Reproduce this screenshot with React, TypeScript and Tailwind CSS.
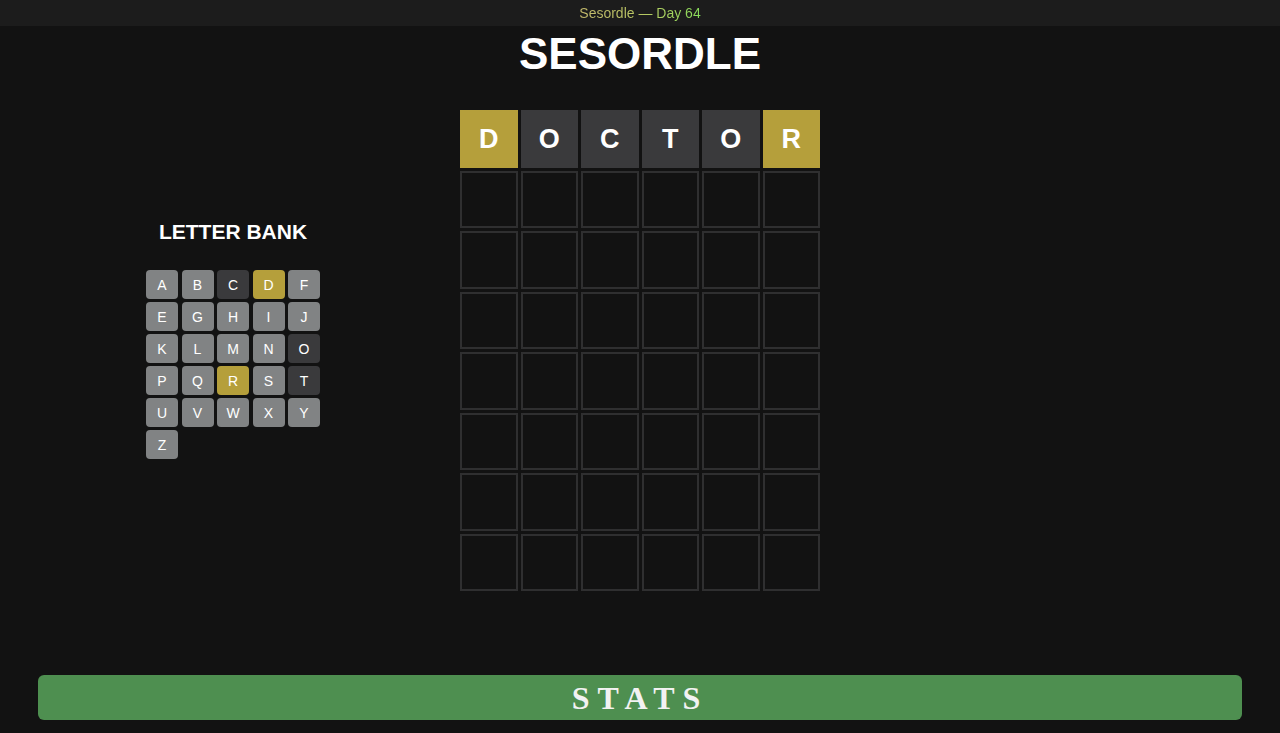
import React from "react";

type Mark = "present" | "absent" | "unused";

const guess: { letter: string; mark: Mark }[] = [
  { letter: "D", mark: "present" },
  { letter: "O", mark: "absent" },
  { letter: "C", mark: "absent" },
  { letter: "T", mark: "absent" },
  { letter: "O", mark: "absent" },
  { letter: "R", mark: "present" },
];

const bank: { letter: string; mark: Mark }[] = [
  "A", "B", "C", "D", "F", "E", "G", "H", "I", "J", "K", "L", "M",
  "N", "O", "P", "Q", "R", "S", "T", "U", "V", "W", "X", "Y", "Z",
].map((letter) => ({
  letter,
  mark: "DR".includes(letter) ? "present" : "COT".includes(letter) ? "absent" : "unused",
}));

const tileColor: Record<Mark, string> = {
  present: "bg-[#b59f3b]",
  absent: "bg-[#3a3a3c]",
  unused: "bg-[#818384]",
};

const Tile = ({ letter, mark }: { letter?: string; mark?: Mark }) =>
  letter && mark ? (
    <div
      className={`flex h-[57.5px] w-[57.5px] items-center justify-center text-[27px] font-bold text-white ${tileColor[mark]}`}
    >
      {letter}
    </div>
  ) : (
    <div className="h-[57.5px] w-[57.5px] border-2 border-[#2f2f30]" />
  );

const LetterBank = () => (
  <div className="flex flex-col items-center pl-[6px] pt-[111px]">
    <h2 className="text-[21px] font-bold leading-none text-white">LETTER BANK</h2>
    <div className="mt-[28px] grid grid-cols-[repeat(5,32px)] gap-x-[3.5px] gap-y-[3px]">
      {bank.map((k) => (
        <div
          key={k.letter}
          className={`flex h-[29px] items-center justify-center rounded text-sm text-white ${tileColor[k.mark]}`}
        >
          {k.letter}
        </div>
      ))}
    </div>
  </div>
);

const Board = () => (
  <div className="flex flex-col gap-[3px]">
    <div className="flex gap-[3px]">
      {guess.map((g, i) => (
        <Tile key={i} letter={g.letter} mark={g.mark} />
      ))}
    </div>
    {Array.from({ length: 7 }).map((_, r) => (
      <div key={r} className="flex gap-[3px]">
        {Array.from({ length: 6 }).map((_, c) => (
          <Tile key={c} />
        ))}
      </div>
    ))}
  </div>
);

export default function App() {
  return (
    <main
      className="flex min-h-screen flex-col bg-[#121212]"
      style={{ fontFamily: '"Liberation Sans", Arial, sans-serif' }}
    >
      <header className="flex h-[26px] items-center justify-center bg-[#1c1c1c]">
        <p className="bg-gradient-to-r from-[#c4b96c] via-[#b9c763] to-[#86dc5a] bg-clip-text text-sm text-transparent">
          Sesordle — Day 64
        </p>
      </header>
      <h1 className="mt-[6px] text-center text-[44px] font-bold leading-[44px] text-white">
        SESORDLE
      </h1>
      <div className="mt-[34px] grid grid-cols-[1fr_auto_1fr]">
        <LetterBank />
        <Board />
        <div />
      </div>
      <div className="mt-auto px-[38px] pb-[13px]">
        <button
          className="flex h-[45px] w-full items-center justify-center rounded-md bg-[#4e8f50] text-[32px] font-bold tracking-[8px] text-[#f2f2f2]"
          style={{ fontFamily: '"Liberation Serif", "Times New Roman", serif' }}
        >
          STATS
        </button>
      </div>
    </main>
  );
}
